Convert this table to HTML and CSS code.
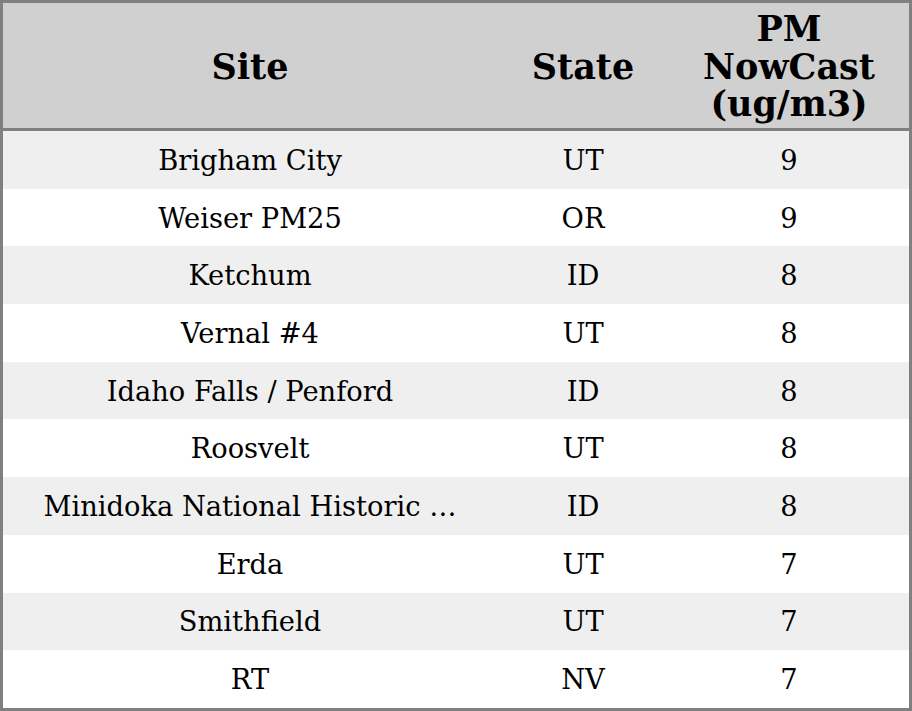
FILE: index.html
```html
<!DOCTYPE html>
<html>
<head>
<meta charset="utf-8">
<link rel="stylesheet" href="styles.css">
</head>
<body>
<table class="grid">
  <colgroup>
    <col class="c-site">
    <col class="c-state">
    <col class="c-pm">
  </colgroup>
  <thead>
    <tr><th>Site</th><th>State</th><th>PM<br>NowCast<br>(ug/m3)</th></tr>
  </thead>
  <tbody>
    <tr><td>Brigham City</td><td>UT</td><td>9</td></tr>
    <tr><td>Weiser PM25</td><td>OR</td><td>9</td></tr>
    <tr><td>Ketchum</td><td>ID</td><td>8</td></tr>
    <tr><td>Vernal #4</td><td>UT</td><td>8</td></tr>
    <tr><td>Idaho Falls / Penford</td><td>ID</td><td>8</td></tr>
    <tr><td>Roosvelt</td><td>UT</td><td>8</td></tr>
    <tr><td>Minidoka National Historic …</td><td>ID</td><td>8</td></tr>
    <tr><td>Erda</td><td>UT</td><td>7</td></tr>
    <tr><td>Smithfield</td><td>UT</td><td>7</td></tr>
    <tr><td>RT</td><td>NV</td><td>7</td></tr>
  </tbody>
</table>
</body>
</html>
```
FILE: styles.css
```css
html, body {
  margin: 0;
  padding: 0;
  background: #ffffff;
}
.grid {
  width: 912px;
  height: 711px;
  border-collapse: separate;
  border-spacing: 0;
  border: 3px solid #808080;
  table-layout: fixed;
  font-family: "DejaVu Serif", serif;
  color: #000;
  box-sizing: border-box;
}
.c-site { width: 494px; }
.c-state { width: 172px; }
.c-pm { width: 240px; }
.grid th {
  background: #d0d0d0;
  font-size: 35px;
  font-weight: bold;
  line-height: 37.7px;
  height: 128px;
  padding: 2px 0 0 0;
  border-bottom: 3px solid #808080;
  text-align: center;
  vertical-align: middle;
  box-sizing: border-box;
}
.grid td {
  font-size: 27.3px;
  line-height: 32px;
  height: 57.7px;
  padding: 2px 0 0 0;
  text-align: center;
  vertical-align: middle;
  white-space: nowrap;
  box-sizing: border-box;
}
.grid tbody tr:nth-child(odd) td {
  background: #efefef;
}
```
